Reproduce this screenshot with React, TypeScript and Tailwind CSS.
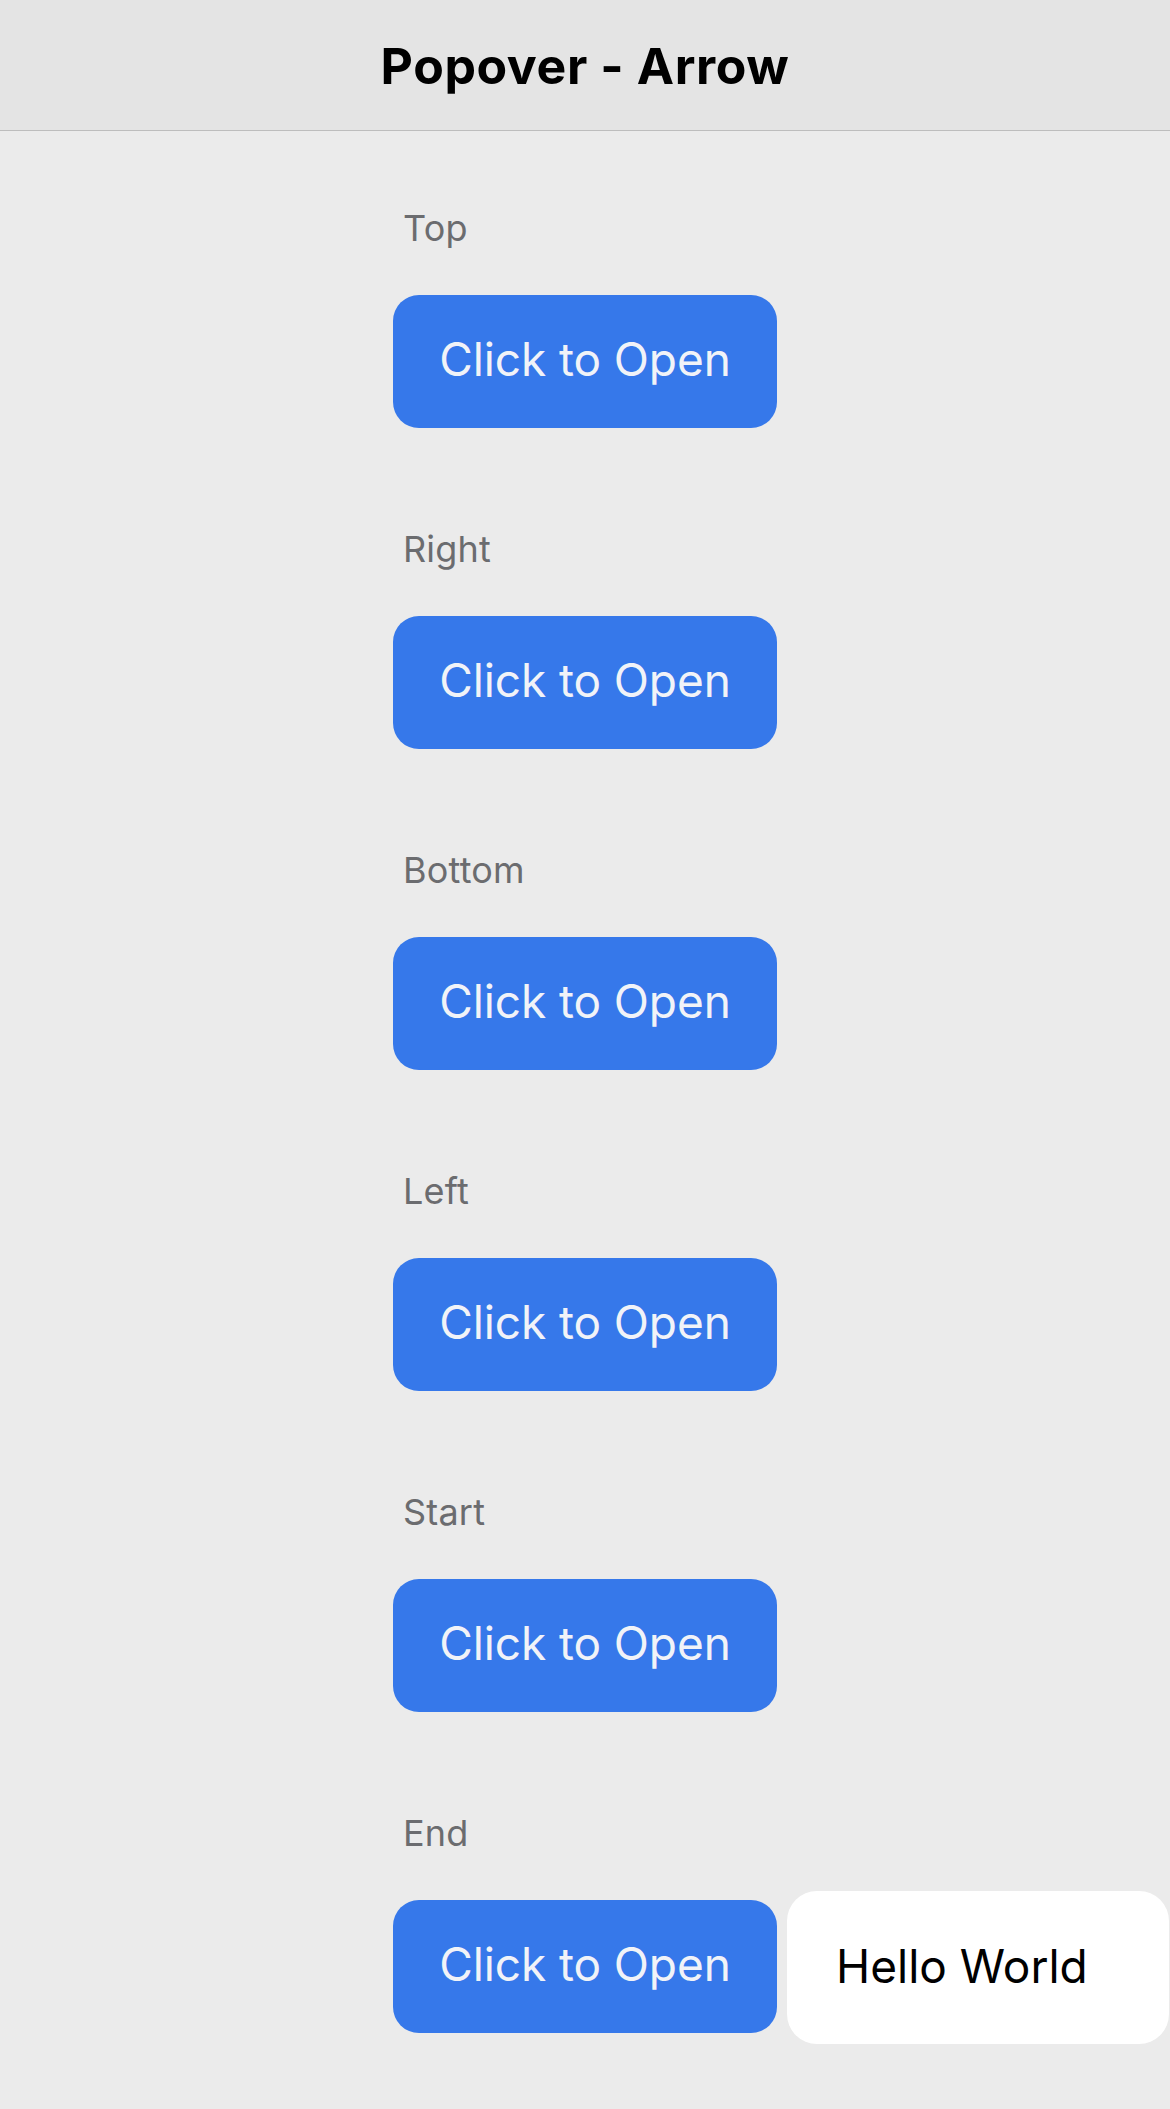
import React from 'react';

const placements = ['Top', 'Right', 'Bottom', 'Left', 'Start', 'End'];

function PopoverRow({ label, open }: { label: string; open?: boolean }) {
  return (
    <section className="flex flex-col">
      <span className="pl-[10px] text-[36px] leading-[42px] text-[#6b6c6f] tracking-[0.2px]">{label}</span>
      <div className="relative mt-[46px]">
        <button className="h-[133px] w-[384px] rounded-[26px] bg-[#3678ea] pb-[5px] text-[46px] text-[#f1f3f8] tracking-[-0.1px]">
          Click to Open
        </button>
        {open && (
          <div className="absolute left-[394px] top-[-9px] flex h-[153px] w-[382px] items-center rounded-[30px] bg-white pb-[3px] pl-[49px] text-[46px] text-black tracking-[0px]">
            Hello World
          </div>
        )}
      </div>
    </section>
  );
}

export default function App() {
  return (
    <div className="min-h-[2109px] w-full bg-[#ebebeb] font-['Inter','Noto_Sans',sans-serif] overflow-hidden">
      <header className="flex h-[131px] items-center justify-center border-b border-[#bdbdbd] bg-[#e4e4e4]">
        <h1 className="pt-[2px] text-[50px] font-bold tracking-[0.6px] text-black">Popover - Arrow</h1>
      </header>
      <main className="mx-auto flex w-[384px] flex-col gap-[100px] pt-[76px]">
        {placements.map((p) => (
          <PopoverRow key={p} label={p} open={p === 'End'} />
        ))}
      </main>
    </div>
  );
}
